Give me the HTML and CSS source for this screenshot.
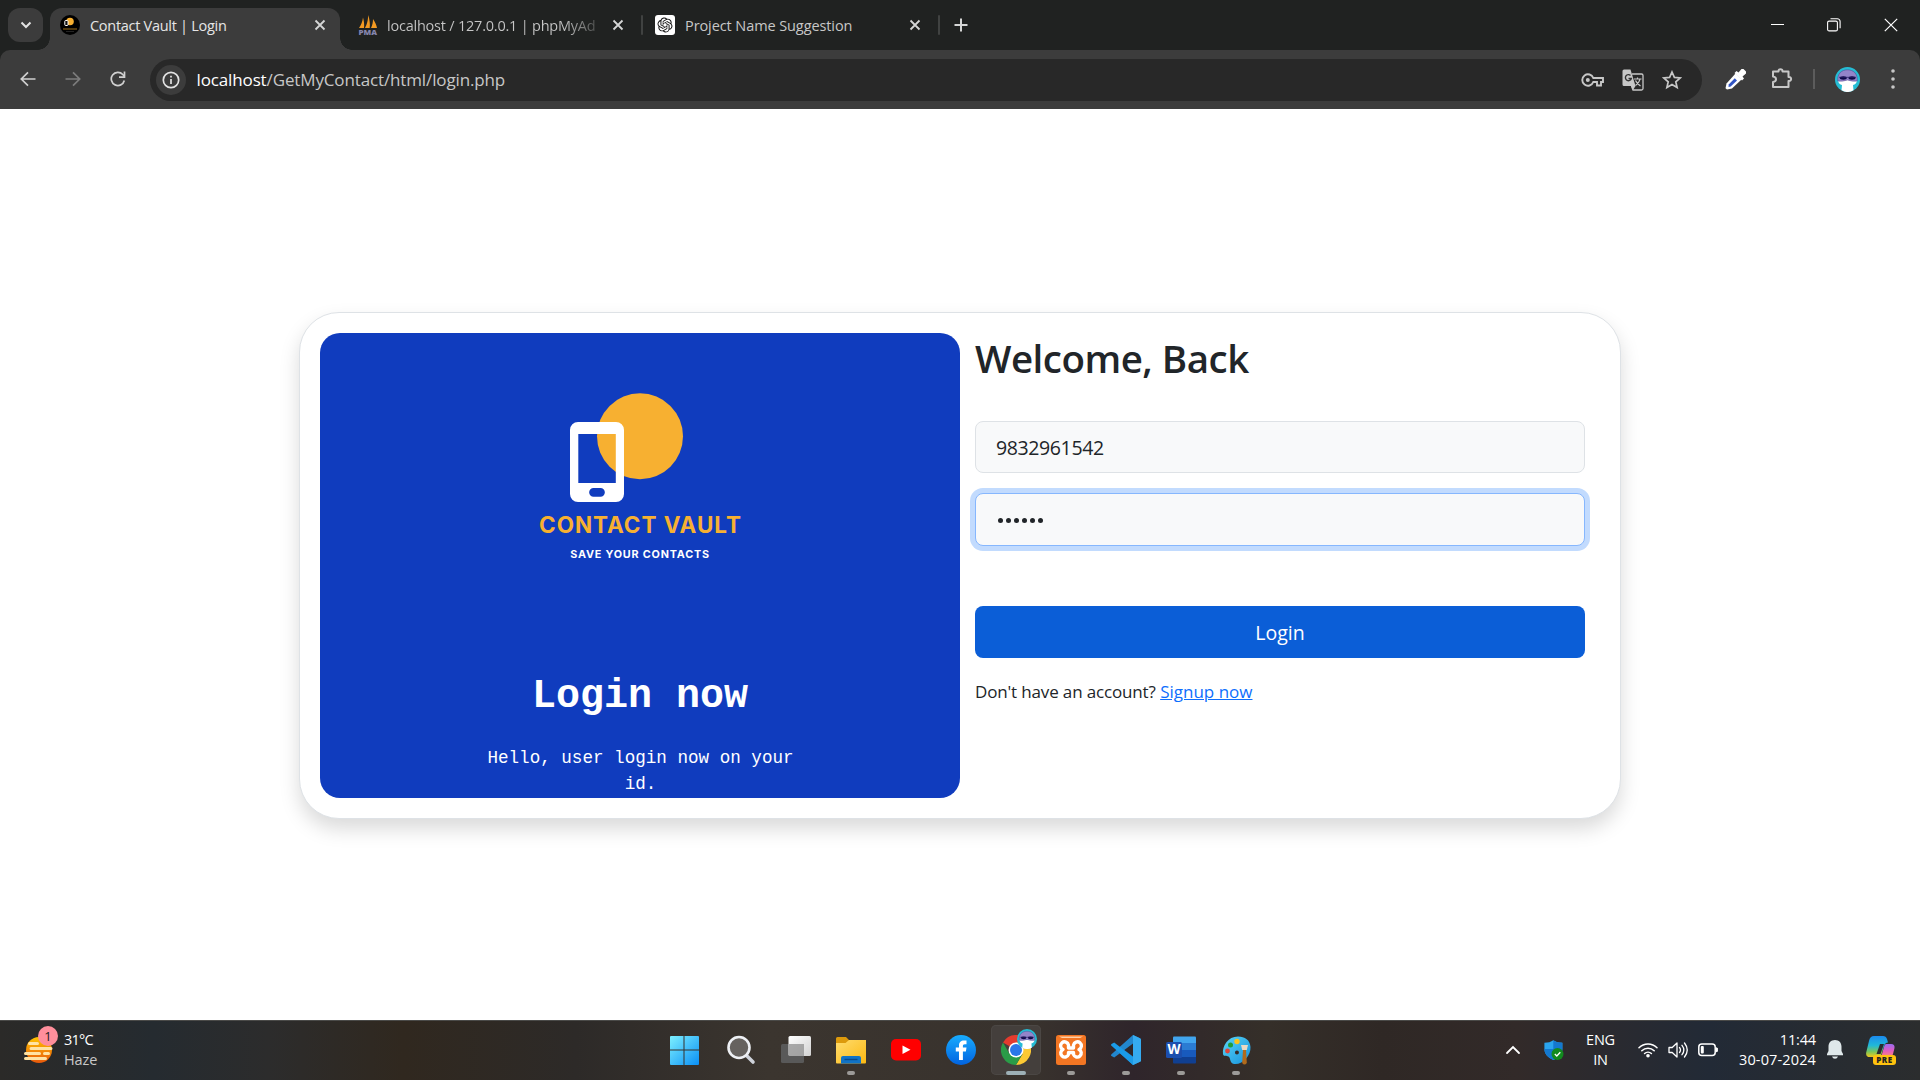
FILE: index.html
```html
<!DOCTYPE html>
<html lang="en">
<head>
<meta charset="utf-8">
<title>Contact Vault | Login</title>
<link rel="stylesheet" href="styles.css">
</head>
<body>
<svg class="defs" width="0" height="0" aria-hidden="true">
  <defs>
    <linearGradient id="win" x1="0" y1="0" x2="1" y2="1"><stop offset="0" stop-color="#7df0ff"/><stop offset="1" stop-color="#0a8ff5"/></linearGradient>
    <linearGradient id="sun" x1="0" y1="0" x2="0" y2="1"><stop offset="0" stop-color="#ffc400"/><stop offset="1" stop-color="#e8590c"/></linearGradient>
    <linearGradient id="fold" x1="0" y1="0" x2="1" y2="1"><stop offset="0" stop-color="#ffdc6e"/><stop offset="1" stop-color="#fcb912"/></linearGradient>
    <linearGradient id="pale" x1="0" y1="0" x2="1" y2="1"><stop offset="0" stop-color="#ffffff"/><stop offset="1" stop-color="#d2d2d2"/></linearGradient>
    <linearGradient id="face" x1="0" y1="0" x2="0" y2="1"><stop offset="0" stop-color="#18acfe"/><stop offset="1" stop-color="#0163e0"/></linearGradient>
    <linearGradient id="cop1" x1="0" y1="0" x2="0" y2="1"><stop offset="0" stop-color="#1b8bf0"/><stop offset=".45" stop-color="#20b8d8"/><stop offset=".75" stop-color="#7bc65a"/><stop offset="1" stop-color="#f2c81a"/></linearGradient>
    <linearGradient id="cop2" x1="0" y1="0" x2="0" y2="1"><stop offset="0" stop-color="#9a6cf0"/><stop offset=".5" stop-color="#e25cc0"/><stop offset="1" stop-color="#ff8a70"/></linearGradient>
    <linearGradient id="paint" x1="0" y1="0" x2="1" y2="1"><stop offset="0" stop-color="#5bd6f6"/><stop offset="1" stop-color="#1490dc"/></linearGradient>
    <symbol id="avatar" viewBox="0 0 25 25">
      <circle cx="12.500" cy="12.500" r="12.500" fill="#25bcd4"/>
      <path d="M3 13h19c0 3-2 4.500-4 5l.5 5.300a12 12 0 0 1-12 0L7 18c-2-.5-4-2-4-5z" fill="#fff"/>
      <path d="M2.800 14C2 6.500 7 2.800 12.500 2.800S23 6.500 22.200 14q-4.500.8-9.700-1-5.200 1.800-9.700 1z" fill="#9384c9" stroke="#4d3f8c" stroke-width=".5"/>
      <ellipse cx="8.300" cy="11" rx="3.500" ry="1.700" fill="#100a48"/><ellipse cx="17" cy="11" rx="3.500" ry="1.700" fill="#100a48"/>
      <path d="M4 10.300h17" stroke="#2a1f68" stroke-width=".8"/>
    </symbol>
    <symbol id="close" viewBox="0 0 12 12"><path d="M1.500 1.500l9 9M10.500 1.500l-9 9" fill="none" stroke="currentColor" stroke-width="1.800"/></symbol>
  </defs>
</svg>

<header class="browser">
  <div class="tabstrip">
    <button class="tabsearch"><svg width="12" height="8" viewBox="0 0 12 8"><path d="M1.500 1.500L6 6l4.500-4.500" fill="none" stroke="#e3e3e3" stroke-width="2"/></svg></button>
    <div class="tab active">
      <svg class="fav" width="20" height="20" viewBox="0 0 20 20"><circle cx="10" cy="10" r="10" fill="#000"/><circle cx="10" cy="6.500" r="3.800" fill="#f7b031"/><rect x="4.800" y="5.500" width="3.200" height="5" rx=".8" fill="#111" stroke="#fff" stroke-width="1"/><path d="M3 14h14" stroke="#7a5513" stroke-width="1.300"/><path d="M6 16.500h8" stroke="#333" stroke-width=".7"/></svg>
      <span class="title t1">Contact Vault | Login</span>
      <svg class="x" width="12" height="12"><use href="#close"/></svg>
    </div>
    <div class="tab second">
      <svg class="fav sails" width="20" height="20" viewBox="0 0 20 20"><path d="M1 13C3 10 4.500 7 5 2.500c1 4 1.500 7 1 10.500zM7 13c2-4 3-7 3.200-13 1.500 5 2 9 1.500 13zM13 13c1.500-3 2-6 2-9 2 3 3.500 6 4 9z" fill="#f39a22"/><text class="pma" x=".5" y="19.500" textLength="18.500" lengthAdjust="spacingAndGlyphs">PMA</text></svg>
      <span class="title t2">localhost / 127.0.0.1 | phpMyAd</span>
      <svg class="x" width="12" height="12"><use href="#close"/></svg>
    </div>
    <i class="sep"></i>
    <div class="tab third">
      <svg class="fav" width="20" height="20" viewBox="0 0 20 20"><rect width="20" height="20" rx="3" fill="#fff"/><path transform="translate(2.500 2.500) scale(.625)" fill="#111" d="M22.282 9.821a5.985 5.985 0 0 0-.516-4.910 6.046 6.046 0 0 0-6.510-2.900A6.065 6.065 0 0 0 4.981 4.182a5.985 5.985 0 0 0-3.998 2.900 6.046 6.046 0 0 0 .743 7.097 5.980 5.980 0 0 0 .511 4.911 6.051 6.051 0 0 0 6.515 2.900A5.985 5.985 0 0 0 13.260 24a6.056 6.056 0 0 0 5.772-4.206 5.989 5.989 0 0 0 3.998-2.900 6.056 6.056 0 0 0-.748-7.073zm-9.022 12.608a4.476 4.476 0 0 1-2.876-1.041l.142-.080 4.778-2.758a.795.795 0 0 0 .393-.681v-6.737l2.020 1.169a.071.071 0 0 1 .038.052v5.583a4.504 4.504 0 0 1-4.495 4.494zm-9.661-4.125a4.471 4.471 0 0 1-.535-3.014l.142.085 4.783 2.758a.771.771 0 0 0 .781 0l5.843-3.369v2.332a.080.080 0 0 1-.033.062L9.740 19.950a4.499 4.499 0 0 1-6.141-1.646zM2.341 7.896a4.485 4.485 0 0 1 2.366-1.973V11.600a.766.766 0 0 0 .388.677l5.814 3.354-2.020 1.169a.076.076 0 0 1-.071 0l-4.830-2.787A4.504 4.504 0 0 1 2.341 7.872zm16.596 3.856L13.104 8.364 15.119 7.200a.076.076 0 0 1 .071 0l4.830 2.791a4.494 4.494 0 0 1-.677 8.104v-5.677a.790.790 0 0 0-.407-.667zm2.011-3.023l-.142-.085-4.774-2.782a.776.776 0 0 0-.785 0L9.409 9.230V6.897a.066.066 0 0 1 .028-.062l4.830-2.787a4.499 4.499 0 0 1 6.680 4.660zM8.307 12.863l-2.020-1.164a.080.080 0 0 1-.038-.057V6.074a4.499 4.499 0 0 1 7.376-3.454l-.142.081L8.704 5.459a.795.795 0 0 0-.393.681zm1.098-2.365l2.602-1.500 2.607 1.500v2.999l-2.597 1.500-2.607-1.500z"/></svg>
      <span class="title t3">Project Name Suggestion</span>
      <svg class="x" width="12" height="12"><use href="#close"/></svg>
    </div>
    <i class="sep"></i>
    <svg class="plus" width="14" height="14" viewBox="0 0 14 14"><path d="M7 .5v13M.5 7h13" stroke="#d5d6d6" stroke-width="2"/></svg>
    <div class="wincontrols">
      <svg width="14" height="14" viewBox="0 0 14 14"><path d="M1 6.500h13" stroke="#fff" stroke-width="1"/></svg>
      <svg width="14" height="14" viewBox="0 0 14 14"><rect x=".6" y="3.100" width="9.800" height="9.800" rx="1.500" fill="none" stroke="#fff" stroke-width="1.100"/><path d="M3.500.8h6.800a2.800 2.800 0 0 1 2.800 2.800v6.700" fill="none" stroke="#fff" stroke-width="1.100"/></svg>
      <svg width="14" height="14" viewBox="0 0 14 14"><path d="M.8.8l12.400 12.400M13.200.8L.8 13.200" stroke="#fff" stroke-width="1.200"/></svg>
    </div>
  </div>
  <div class="toolbar">
    <nav class="nav">
      <svg width="16" height="16" viewBox="0 0 16 16"><path d="M15.500 8H1.500M8 1.300L1.300 8 8 14.700" fill="none" stroke="#d0d0d0" stroke-width="1.700"/></svg>
      <svg width="16" height="16" viewBox="0 0 16 16"><path d="M.5 8h14M8 1.300L14.700 8 8 14.700" fill="none" stroke="#7c7c7c" stroke-width="1.700"/></svg>
      <svg width="16" height="16" viewBox="0 0 16 16"><path d="M14.300 9.500A6.600 6.600 0 1 1 12.800 3.500L14.500 5.500" fill="none" stroke="#d0d0d0" stroke-width="1.700"/><path d="M14.500.5v5.700H9" fill="none" stroke="#d0d0d0" stroke-width="1.700"/></svg>
    </nav>
    <div class="omnibox">
      <span class="info"><svg width="18" height="18" viewBox="0 0 18 18"><circle cx="9" cy="9" r="7.700" fill="none" stroke="#e3e3e3" stroke-width="1.700"/><path d="M9 8v5M9 4.800v1.800" stroke="#e3e3e3" stroke-width="1.700"/></svg></span>
      <span class="url"><b>localhost</b>/GetMyContact/html/login.php</span>
      <div class="actions">
        <svg width="23" height="14" viewBox="0 0 23 14"><path d="M12.300 5A5.700 5.700 0 1 0 12.300 9H16v3.500h4V9h2V5z" fill="none" stroke="#c7c7c7" stroke-width="1.900"/><circle cx="6.800" cy="7" r="2" fill="#c7c7c7"/></svg>
        <svg width="22" height="22" viewBox="0 0 22 22"><path d="M10 5h9.500A1.500 1.500 0 0 1 21 6.500v13a1.500 1.500 0 0 1-1.500 1.500H11l-1.500-4" fill="none" stroke="#c7c7c7" stroke-width="1.300"/><path d="M2 .5h6.500L13.500 17H2A1.500 1.500 0 0 1 .5 15.500V2A1.500 1.500 0 0 1 2 .5z" fill="#c7c7c7"/><path d="M9 17h4.500L11 21z" fill="#c7c7c7"/><path d="M8.500 6.500a3 3 0 1 0 .8 3H6.500" fill="none" stroke="#333" stroke-width="1.400"/><path d="M12 10h7.500M15.500 8.500V10M18 10c-.5 3-2.500 5-4.500 6.500M13.500 11.500c1 2.500 3 4 5 5.500" fill="none" stroke="#c7c7c7" stroke-width="1.200"/></svg>
        <svg width="20" height="20" viewBox="0 0 20 20"><path d="M10 2l2.400 5.400 5.800.5-4.400 3.900 1.300 5.700L10 14.500l-5.100 3 1.300-5.700L1.800 7.900l5.800-.5z" fill="none" stroke="#c7c7c7" stroke-width="1.700"/></svg>
      </div>
    </div>
    <div class="extensions">
      <svg width="22" height="22" viewBox="0 0 22 22"><path d="M10.500 5.500l6 6L7 20.500l-5 1-1.500-1.300 1-4.700z" fill="#fff"/><path d="M9.800 10.200l2.200 2.200-6.300 6.200-2.200.3.200-2.500z" fill="#3154c4"/><path d="M9.500 5l2-2 2 1.500L16.500 1h2L21 3.500v2L17.500 8.500l1.500 2-2 2z" fill="#fff"/></svg>
      <svg width="22" height="22" viewBox="0 0 22 22"><path d="M2 3.500h5.500C7 .5 12 .5 11.500 3.500H17.500V9c3.500-.5 3.500 4.500 0 4V19H2v-5c4-.5 4-5 0-5.500z" fill="none" stroke="#c7c7c7" stroke-width="2" stroke-linejoin="round"/></svg>
      <i class="bar"></i>
      <svg width="25" height="25"><use href="#avatar"/></svg>
      <svg width="4" height="20" viewBox="0 0 4 20" fill="#c7c7c7"><circle cx="2" cy="2" r="1.800"/><circle cx="2" cy="10" r="1.800"/><circle cx="2" cy="18" r="1.800"/></svg>
    </div>
  </div>
</header>

<main class="page">
  <section class="card">
    <div class="brand">
      <svg class="logo" width="280" height="220" viewBox="0 0 280 220">
        <circle cx="140" cy="66.300" r="43" fill="#f7b031"/>
        <path fill-rule="evenodd" d="M78 52h38a8 8 0 0 1 8 8v64a8 8 0 0 1-8 8H78a8 8 0 0 1-8-8V60a8 8 0 0 1 8-8zM78.300 64v49h37.500V64zM93.500 118a4.300 4.300 0 0 0 0 8.700h7a4.300 4.300 0 0 0 0-8.700z" fill="#fff"/>
        <text class="logo-name" x="140.500" y="163.300" text-anchor="middle">CONTACT VAULT</text>
        <text class="logo-tag" x="140" y="188.300" text-anchor="middle">SAVE YOUR CONTACTS</text>
      </svg>
      <h2 class="brand-title">Login now</h2>
      <p class="brand-text">Hello, user login now on your id.</p>
    </div>
    <form class="form">
      <h1 class="welcome">Welcome, Back</h1>
      <div class="input"><span>9832961542</span></div>
      <div class="input focused"><span class="dots"><i></i><i></i><i></i><i></i><i></i><i></i></span></div>
      <button class="submit" type="button">Login</button>
      <p class="signup"><span class="question">Don't have an account?</span> <a href="#">Signup now</a></p>
    </form>
  </section>
</main>

<footer class="taskbar">
  <div class="weather">
    <div class="sunwrap">
      <svg width="30" height="30" viewBox="0 0 30 30"><circle cx="15" cy="15" r="13" fill="url(#sun)"/><g stroke="#ffe3a3" stroke-width="3" stroke-linecap="round"><path d="M5.500 8.500h8M7 13.500h20M1.500 18.500h14M20.500 18.500h4M1.500 23.500h20"/></g></svg>
      <span class="badge">1</span>
    </div>
    <div class="wtext"><span class="deg">31°C</span><span class="haze">Haze</span></div>
  </div>
  <div class="apps">
    <span class="app start"><svg width="30" height="30" viewBox="0 0 30 30"><path d="M2 1h12.500v13.500H1V2a1 1 0 0 1 1-1zM15.500 1H29a1 1 0 0 1 1 1v12.500H15.500zM1 15.500h13.500V30H2a1 1 0 0 1-1-1zM15.500 15.500H30V29a1 1 0 0 1-1 1H15.500z" fill="url(#win)"/></svg></span>
    <span class="app"><svg width="30" height="30" viewBox="0 0 30 30"><path d="M20 20l7 7" stroke="#cfd3da" stroke-width="3.600" stroke-linecap="round"/><circle cx="13" cy="12.500" r="10.500" fill="#66625f" stroke="#eef0f4" stroke-width="2.600"/></svg></span>
    <span class="app"><svg width="30" height="30" viewBox="0 0 30 30"><rect x="0" y="9" width="23" height="19" rx="1.500" fill="#595959"/><rect x="7.500" y="1" width="22.500" height="20" rx="1.500" fill="url(#pale)"/><path d="M8 9h15v12H8z" fill="#8f8f8f" opacity=".75"/></svg></span>
    <span class="app run"><svg width="30" height="30" viewBox="0 0 30 30"><path d="M0 7V3.500A1.500 1.500 0 0 1 1.500 2H10l3 3v4H0z" fill="#dd9a0c"/><path d="M0 8h9.500L13 5h17v22.500a1 1 0 0 1-1 1H1a1 1 0 0 1-1-1z" fill="url(#fold)"/><path d="M5 28.500V23a2 2 0 0 1 2-2h16a2 2 0 0 1 2 2v5.500z" fill="#1173c6"/><path d="M8.500 24.500h13" stroke="#0a4a8c" stroke-width="1.400"/></svg></span>
    <span class="app"><svg width="30" height="30" viewBox="0 0 30 30"><rect y="4" width="30" height="21.500" rx="5" fill="#f00"/><path d="M11.500 10.500v8.500l8-4.250z" fill="#fff"/></svg></span>
    <span class="app"><svg width="30" height="30" viewBox="0 0 30 30"><circle cx="15" cy="15" r="15" fill="url(#face)"/><path d="M13 25V16.500H9.800V12.500H13V10.500C13 7 15 5.500 18 5.500h2.500v3.800h-1.700c-1.500 0-1.900.7-1.900 1.900v1.300h3.600l-.6 4h-3V25z" fill="#fff"/></svg></span>
    <span class="app run on"><svg width="30" height="30" viewBox="0 0 30 30"><path d="M15 15L2 7.500A15 15 0 0 1 28 7.500H15z" fill="#e33b2e"/><path d="M15 15V7.500h13A15 15 0 0 1 15 30l6.500-11z" fill="#fcc934"/><path d="M2 7.500L8.500 18.700l13 0L15 30A15 15 0 0 1 2 7.500z" fill="#2a9c48"/><circle cx="15" cy="15" r="7.500" fill="#fff"/><circle cx="15" cy="15" r="6" fill="#2a77e8"/></svg><svg class="who" width="20" height="20"><use href="#avatar"/></svg></span>
    <span class="app run"><svg width="30" height="30" viewBox="0 0 30 30"><rect width="30" height="30" rx="2.500" fill="#f37623"/><path d="M3 1.500h24l-3 1.500H6z" fill="#ffd0a8"/><path d="M12.500 13h5V10a4 4 0 1 1 5.500 4.500 4 4 0 1 1-5.500 5V17.500h-5V19.500a4 4 0 1 1-5.500-5A4 4 0 1 1 12.500 10z" fill="none" stroke="#fff" stroke-width="3.400" stroke-linejoin="round"/></svg></span>
    <span class="app run"><svg width="30" height="30" viewBox="0 0 30 30"><path d="M22 0l7 3.200q1 .5 1 1.600v20.400q0 1.100-1 1.600L22 30 9 18.300 3.200 22.500.5 21q-1-.8 0-1.700L22 0z" fill="#2287ce"/><path d="M.5 9L3.200 7.500 22 22v8L.5 10.800q-1-.9 0-1.800z" fill="#1a9be8"/><path d="M22 0l7 3.200q1 .5 1 1.600v20.400q0 1.100-1 1.600L22 30z" fill="#35abf0"/><path d="M22 8.500v13L13.300 15z" fill="#2f282b"/></svg></span>
    <span class="app run"><svg width="30" height="30" viewBox="0 0 30 30"><path d="M8 1.500h21q1 0 1 1V8H7V2.500q0-1 1-1z" fill="#41a5ee"/><path d="M7 8h23v7H7z" fill="#2b7cd3"/><path d="M7 15h23v7H7z" fill="#185abd"/><path d="M7 22h23v5.500q0 1-1 1H8q-1 0-1-1z" fill="#103f91"/><rect x="0" y="7" width="16" height="16" rx="1.500" fill="#1c4fae"/><text class="word" x="8" y="19.300" text-anchor="middle">W</text></svg></span>
    <span class="app run"><svg width="30" height="30" viewBox="0 0 30 30"><path d="M17 1.500C7 1.500 1 11 2 19c.5 3 3.500 1.500 5.500 2.500 2.500 1.500 1 7 5.500 7.500C22 30 30 20 29.500 12 29 5 24 1.500 17 1.500zM16 15.500a2 2 0 1 1-.1 4 2 2 0 0 1 .1-4z" fill="url(#paint)"/><circle cx="16" cy="6.500" r="2.700" fill="#fcc21b"/><circle cx="9.500" cy="10" r="2.500" fill="#1f9d3a"/><circle cx="6.500" cy="16" r="2.400" fill="#e0463a"/><path d="M20 10h7l-1.200 5h-4.600z" fill="#ead9c4"/><path d="M22 15h3l.8 13q-2.300 3-4.600 0z" fill="#b06a1c"/></svg></span>
  </div>
  <div class="tray">
    <svg class="chev" width="16" height="10" viewBox="0 0 16 10"><path d="M2 8l6-6 6 6" fill="none" stroke="#fff" stroke-width="1.800" stroke-linecap="round"/></svg>
    <svg class="shield" width="20" height="20" viewBox="0 0 20 20"><path d="M9.300.3C7 2 4 2.800.4 2.800V9c0 5 3.500 8.500 9 11 5.500-2.500 9-6 9-11V2.800C14.500 2.800 11.500 2 9.300.3z" fill="#2aa4ee"/><path d="M9.300.3V20c5.500-2.500 9-6 9-11V2.800C14.500 2.800 11.500 2 9.300.3zM.4 9h9V20C4 17.500.4 14 .4 9z" fill="#1478cf"/><circle cx="13.500" cy="14" r="6" fill="#128a1e"/><path d="M10.800 14l2 2 3.500-3.700" fill="none" stroke="#fff" stroke-width="1.300"/></svg>
    <div class="lang"><span>ENG</span><span>IN</span></div>
    <svg class="wifi" width="20" height="16" viewBox="0 0 20 16"><g fill="none" stroke="#fff" stroke-width="1.500" stroke-linecap="round"><path d="M1 5.800a12.500 12.500 0 0 1 18 0M3.800 8.800a8.700 8.700 0 0 1 12.400 0M6.600 11.500a5 5 0 0 1 6.800 0"/></g><circle cx="10" cy="13.700" r="1.800" fill="#fff"/></svg>
    <svg class="snd" width="20" height="18" viewBox="0 0 20 18"><g fill="none" stroke="#fff" stroke-width="1.300" stroke-linejoin="round" stroke-linecap="round"><path d="M1 6.500h3.200L9 2v14l-4.800-4.500H1zM11.500 6.500q2 2.500 0 5M14 4.300q3.700 4.700 0 9.400M16.500 2q5.500 7 0 14"/></g></svg>
    <svg class="bat" width="20" height="14" viewBox="0 0 20 14"><rect x=".8" y="1" width="16.400" height="11.600" rx="3" fill="none" stroke="#fff" stroke-width="1.500"/><rect x="2.800" y="3" width="3" height="7.600" rx="1" fill="#fff"/><path d="M18 4.800q2 0 2 2t-2 2z" fill="#fff" stroke="#fff"/></svg>
    <div class="clock"><span class="time">11:44</span><span class="date">30-07-2024</span></div>
    <svg class="bell" width="16" height="19" viewBox="0 0 16 19"><path d="M8 0c4 0 6.500 2.800 6.500 6.500v4.500l1.500 3v1.300H0V14l1.500-3V6.500C1.500 2.800 4 0 8 0zM5 16.500h6q-.8 2.300-3 2.300t-3-2.300z" fill="#dfe8ea"/></svg>
    <div class="copilot">
      <svg width="29" height="24" viewBox="0 0 29 24"><path d="M20 8h5q4 0 3.500 4l-1.500 6q-1 3.500-4.500 3.500H12q3 0 4-3.500l2-7q.5-3 2-3z" fill="url(#cop2)"/><path d="M8 0h9q3 0 4 3l1 3.500q-3 0-4 3.500l-2.500 8q-1 3-4 3H4q-4.500 0-3.800-4.500L3 5q1-5 5-5z" fill="url(#cop1)"/><path d="M14 8h4l-3.500 10h-4z" fill="#2a2c2f"/></svg>
      <span class="pre">PRE</span>
    </div>
  </div>
</footer>
</body>
</html>
```
FILE: styles.css
```css
* { box-sizing: border-box; }
body {
  margin: 0;
  width: 1920px;
  height: 1080px;
  overflow: hidden;
  display: flex;
  flex-direction: column;
  font-family: "Open Sans", "Noto Sans", sans-serif;
  background: #fff;
}
svg { display: block; flex: none; }
.defs { position: absolute; }
button { border: 0; padding: 0; font: inherit; }

/* Browser chrome */
.browser { flex: none; height: 109px; background: #202221; color: #c7c7c7; }
.tabstrip { height: 50px; display: flex; align-items: center; padding-left: 8px; }
.tabsearch { width: 35px; height: 34px; border-radius: 12px; background: #3c3c3c; display: flex; align-items: center; justify-content: center; }
.tab { position: relative; display: flex; align-items: center; height: 42px; margin-top: 8px; padding-bottom: 8px; font-size: 14.500px; white-space: nowrap; }
.tab .x { margin-left: auto; color: #d5d6d6; }
.title { margin-left: 10px; }
.t1 { letter-spacing: -.28px; }
.t2 { letter-spacing: -.22px; }
.t3 { letter-spacing: -.09px; }
.sails { overflow: visible; }
.pma { font: 800 7px "Open Sans", sans-serif; fill: #8585ad; }
.active { width: 290px; margin-left: 7px; padding-left: 10px; padding-right: 14px; background: #3c3c3c; border-radius: 12px 12px 0 0; color: #e6e6e6; }
.active::before, .active::after { content: ""; position: absolute; bottom: 0; width: 12px; height: 12px; }
.active::before { left: -12px; background: radial-gradient(circle at 0 0, transparent 11.500px, #3c3c3c 12px); }
.active::after { right: -12px; background: radial-gradient(circle at 100% 0, transparent 11.500px, #3c3c3c 12px); }
.second { width: 301px; padding-left: 18px; padding-right: 17px; }
.second .title { margin-left: 9px; color: transparent; background: linear-gradient(90deg, #c7c7c7 175px, #4a4c4b 210px); -webkit-background-clip: text; background-clip: text; }
.sep { width: 2px; height: 20px; background: #404241; border-radius: 1px; }
.third { width: 295px; padding-left: 12px; padding-right: 17px; }
.plus { margin-left: 14px; }
.wincontrols { margin-left: auto; display: flex; gap: 43px; padding-right: 22px; }
.toolbar { height: 59px; background: #3c3c3c; border-radius: 10px 10px 0 0; display: flex; align-items: center; }
.nav { width: 150px; padding-left: 19.500px; display: flex; gap: 29px; margin-top: -1px; }
.omnibox { width: 1552px; height: 42px; border-radius: 21px; background: #282828; display: flex; align-items: center; padding: 0 20px 0 6px; }
.info { width: 30px; height: 30px; border-radius: 50%; background: #3c3c3c; display: flex; align-items: center; justify-content: center; }
.url { margin-left: 10.500px; margin-top: -1px; font-size: 17px; letter-spacing: -.13px; color: #c7c7c7; white-space: nowrap; }
.url b { font-weight: 400; color: #fff; }
.actions { margin-left: auto; display: flex; align-items: center; gap: 18px; }
.extensions { flex: 1; display: flex; align-items: center; padding-left: 23px; margin-top: -1px; }
.extensions svg:nth-of-type(2) { margin-left: 24px; }
.bar { width: 2px; height: 20px; background: #5c5c5c; margin-left: 20px; }
.extensions svg:nth-of-type(3) { margin-left: 20px; }
.extensions svg:nth-of-type(4) { margin-left: 31px; }

/* Login card */
.page { flex: 1; display: flex; justify-content: center; align-items: flex-start; padding-top: 203px; }
.card { width: 1322px; height: 507px; padding: 20px; border: 1px solid #dee2e6; border-radius: 40px; background: #fff; box-shadow: 0 10px 20px rgba(0,0,0,.15); display: flex; }
.brand { width: 640px; height: 465px; flex: none; background: #103cbe; border-radius: 20px; color: #fff; display: flex; flex-direction: column; align-items: center; font-family: "Courier New", "Liberation Mono", monospace; }
.logo { margin-top: 37px; }
.logo-name { font: 700 22.500px "Inter", sans-serif; letter-spacing: .95px; fill: #f7b031; }
.logo-tag { font: 700 10.800px "Inter", sans-serif; letter-spacing: .8px; fill: #fff; }
.brand-title { margin: 83px 0 0; font-size: 40px; line-height: 48px; font-weight: 700; }
.brand-text { margin: 24px 0 0; width: 320px; padding-left: 1px; font-size: 17.600px; line-height: 26px; text-align: center; }
.form { flex: 1; padding: 0 15px; color: #212529; }
.welcome { margin: 0; font-size: 38.500px; letter-spacing: -.5px; font-weight: 600; line-height: 50px; padding-bottom: 2px; }
.input { height: 52px; margin-top: 36px; border: 1px solid #dee2e6; border-radius: 8px; background: #f8f9fa; padding: 0 20px; display: flex; align-items: center; font-size: 19.500px; letter-spacing: -.38px; }
.focused { height: 53px; margin-top: 20px; border-color: #86b7fe; box-shadow: 0 0 0 5px #c2dbfe; }
.dots { display: flex; gap: 3px; padding: 1px 0 0 2px; }
.dots i { width: 5px; height: 5px; border-radius: 50%; background: #212529; }
.submit { display: block; width: 100%; height: 52px; margin-top: 60px; padding-top: 1px; border-radius: 8px; background: #0b5ed7; color: #fff; font-size: 19.500px; }
.signup { margin: 20px 0 0; font-size: 17px; line-height: 27px; }
.question { letter-spacing: -.15px; }
.signup a { color: #0d6efd; }

/* Taskbar */
.taskbar { flex: none; height: 60px; padding-bottom: 2px; display: flex; align-items: center; border-top: 1px solid #4a4a48; color: #fff; font-size: 14.500px; background: linear-gradient(90deg, #2b2a28 0, #252b30 8%, #2c2c2c 14%, #30281f 21%, #2d2a28 30%, #3b352f 40%, #38322d 54%, #2f252b 59%, #352f29 66%, #2f2825 72%, #322a29 79%, #222a36 89%, #2b2d2e 100%); }
.weather { display: flex; width: 670px; padding-left: 24px; align-items: center; }
.sunwrap { position: relative; }
.badge { position: absolute; left: 14px; top: -9px; width: 20px; height: 20px; border-radius: 50%; background: #ff8f9c; color: #222; font-size: 13px; line-height: 20px; text-align: center; }
.wtext, .lang, .clock { display: flex; flex-direction: column; line-height: 20px; }
.wtext { margin-left: 10px; }
.deg { letter-spacing: -.8px; }
.haze { color: #c8c8c8; letter-spacing: -.1px; }
.apps { display: flex; align-items: center; margin-left: -9px; }
.app { position: relative; width: 50px; height: 50px; margin-right: 5px; border-radius: 5px; display: flex; align-items: center; justify-content: center; }
.start { padding-right: 5px; }
.run::after { content: ""; position: absolute; bottom: 0; left: 21px; width: 8px; height: 4px; border-radius: 2px; background: #9c9a98; }
.on { background: #443f3c; box-shadow: inset 0 0 0 1px #4b4744; }
.on::after { left: 15px; width: 20px; background: #9db0b6; }
.who { position: absolute; left: 26px; top: 4px; }
.tray { margin-left: auto; display: flex; align-items: center; padding-right: 25px; }
.shield { margin-left: 23px; }
.lang { margin-left: 22px; margin-right: 1px; text-align: center; width: 29px; letter-spacing: -.2px; }
.wifi { margin-left: 22px; }
.snd { margin-left: 10px; }
.bat { margin-left: 10px; }
.clock { margin-left: 20px; width: 78px; align-items: flex-end; }
.time { letter-spacing: -.15px; }
.date { letter-spacing: .13px; }
.bell { margin-left: 11px; }
.copilot { position: relative; margin-left: 23px; width: 29px; height: 28px; }
.pre { position: absolute; left: 7px; top: 19px; width: 23px; height: 10px; border-radius: 3px; background: #ffc20e; color: #222; font-size: 8px; line-height: 10px; font-weight: 800; text-align: center; letter-spacing: .6px; }
.word { font: 700 13.500px "Open Sans", sans-serif; fill: #fff; }
```
